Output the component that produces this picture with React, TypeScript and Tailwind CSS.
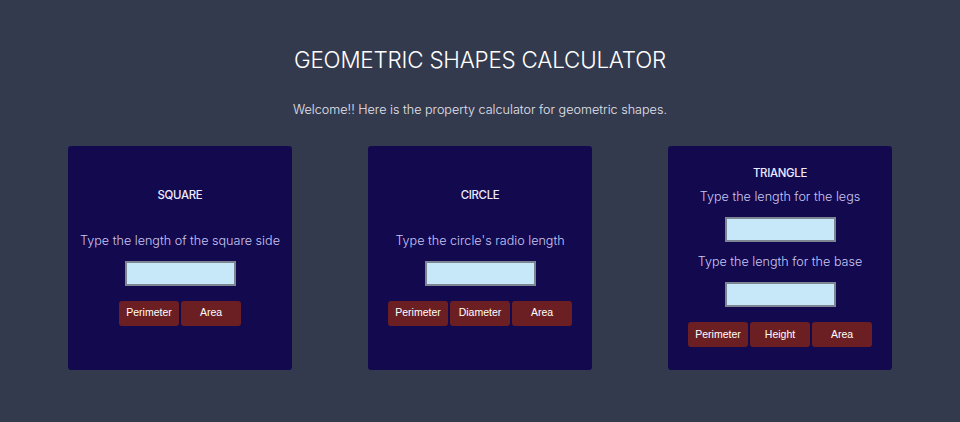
import React from 'react';

interface Shape {
    title: string;
    prompts: string[];
    buttons: string[];
}

const shapes: Shape[] = [
    { title: 'SQUARE', prompts: ['Type the length of the square side'], buttons: ['Perimeter', 'Area'] },
    { title: 'CIRCLE', prompts: ["Type the circle's radio length"], buttons: ['Perimeter', 'Diameter', 'Area'] },
    {
        title: 'TRIANGLE',
        prompts: ['Type the length for the legs', 'Type the length for the base'],
        buttons: ['Perimeter', 'Height', 'Area'],
    },
];

function Card({ shape }: { shape: Shape }) {
    const single = shape.prompts.length === 1;
    return (
        <div className="w-[224px] h-[224px] pb-[4px] bg-[#12094f] rounded-[3px] flex flex-col items-center justify-center">
            <h2 className={`text-[11.4px] leading-[16px] font-medium text-[#eceaff] tracking-[-0.3px] ${single ? 'mb-[29px]' : 'mb-[7px]'}`}>
                {shape.title}
            </h2>
            {shape.prompts.map((p, i) => (
                <div key={i} className="flex flex-col items-center">
                    <p className={`text-[12.6px] leading-[18px] font-light text-[#cbc6f2] whitespace-nowrap ${i > 0 ? 'mt-[11px]' : ''}`}>
                        {p}
                    </p>
                    <input
                        type="text"
                        className="mt-[11px] w-[111px] h-[25px] bg-[#c6e8f8] border-2 border-[#7d8593] outline-none"
                    />
                </div>
            ))}
            <div className="flex gap-[2px] mt-[15px]">
                {shape.buttons.map((b) => (
                    <button
                        key={b}
                        className="w-[60px] h-[25px] rounded-[3px] bg-[#6b1f22] text-white text-[10.5px] font-['Liberation_Sans',Arial,sans-serif]"
                    >
                        {b}
                    </button>
                ))}
            </div>
        </div>
    );
}

export default function App() {
    return (
        <div className="min-h-[422px] bg-[#343a4e] font-['Inter',sans-serif] flex flex-col items-center">
            <h1 className="mt-[45px] text-[22.4px] leading-[30px] font-light text-white tracking-[-0.2px]">
                GEOMETRIC SHAPES CALCULATOR
            </h1>
            <p className="mt-[26px] text-[12.6px] leading-[18px] font-light text-[#e4e4ee]">
                Welcome!! Here is the property calculator for geometric shapes.
            </p>
            <div className="mt-[27px] flex gap-[76px]">
                {shapes.map((s) => (
                    <Card key={s.title} shape={s} />
                ))}
            </div>
        </div>
    );
}
